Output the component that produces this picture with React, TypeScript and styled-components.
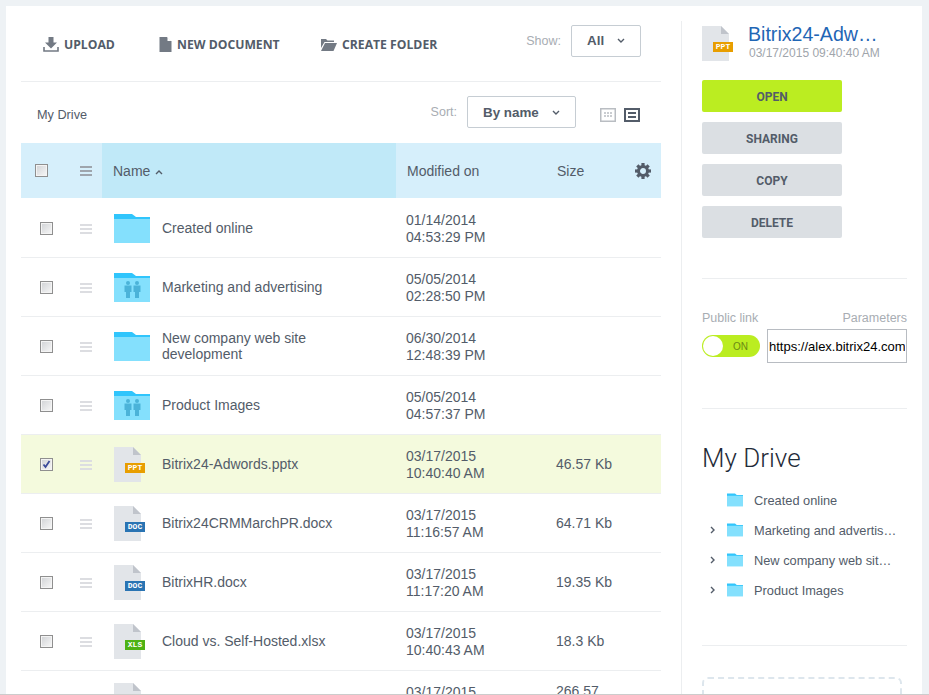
import React from "react";
import styled, { createGlobalStyle } from "styled-components";

const GlobalStyle = createGlobalStyle`
  html, body {
    margin: 0;
    padding: 0;
    background: #eef2f5;
    font-family: "Liberation Sans", Arial, sans-serif;
    color: #535c69;
  }
`;

const Page = styled.div`
  box-sizing: border-box;
  height: 695px;
  padding: 6px 7px 0 6px;
  overflow: hidden;
  border-bottom: 1px solid #ccc;
`;

const Card = styled.div`
  display: flex;
  height: 700px;
  background: #fff;
  padding: 0 15px;
  gap: 20px;
`;

const Main = styled.div`
  width: 640px;
  flex: none;
`;

const Toolbar = styled.div`
  box-sizing: border-box;
  display: flex;
  align-items: center;
  height: 76px;
  padding: 2px 0 0 22px;
  border-bottom: 1px solid #eceef0;
`;

const ToolButton = styled.div<{ $width: number }>`
  display: flex;
  align-items: center;
  width: ${(p) => p.$width}px;
  gap: 5px;
  font: 700 12.2px "Open Sans", sans-serif;
  color: #535c69;
  svg {
    flex: none;
  }
`;

const ShowWrap = styled.div`
  display: flex;
  align-items: center;
  margin-left: auto;
  margin-top: -8px;
  margin-right: 20px;
  gap: 10px;
`;

const Hint = styled.span`
  font-size: 12.5px;
  color: #a8adb3;
`;

const Select = styled.div<{ $width: number; $height: number }>`
  box-sizing: border-box;
  display: flex;
  align-items: center;
  justify-content: space-between;
  width: ${(p) => p.$width}px;
  height: ${(p) => p.$height}px;
  padding: 0 15px;
  border: 1px solid #c6cdd3;
  border-radius: 2px;
  font-size: 13.4px;
  font-weight: 700;
  color: #535c69;
`;

const SortRow = styled.div`
  display: flex;
  align-items: center;
  height: 61px;
  padding: 0 21px 0 16px;
`;

const Crumb = styled.span`
  font-size: 12.7px;
  margin-top: 4px;
  color: #535c69;
`;

const SortWrap = styled.div`
  display: flex;
  align-items: center;
  gap: 10px;
  margin-left: auto;
  margin-top: -1px;
`;

const ViewIcons = styled.div`
  display: flex;
  gap: 8px;
  margin-left: 24px;
  margin-top: 4px;
`;

const ViewIcon = styled.svg`
  display: block;
`;

const HeaderRow = styled.div`
  display: grid;
  grid-template-columns: 81px 294px 150px 1fr;
  height: 55px;
  margin-bottom: 1px;
  background: #d6effb;
  font-size: 14px;
`;

const Row = styled.div<{ $selected?: boolean }>`
  display: grid;
  grid-template-columns: 81px 294px 150px 1fr;
  height: 58px;
  border-bottom: 1px solid #eceef0;
  background: ${(p) => (p.$selected ? "#f4fadd" : "#fff")};
  font-size: 14px;
`;

const Controls = styled.div<{ $pad: number }>`
  display: flex;
  align-items: center;
  padding-left: ${(p) => p.$pad}px;
`;

const Check = styled.span`
  box-sizing: border-box;
  display: flex;
  align-items: center;
  justify-content: center;
  width: 13px;
  height: 13px;
  flex: none;
  border: 1px solid #8f8f8f;
  box-shadow: inset 0 0 0 1px #f4f4f4;
  background: linear-gradient(135deg, #d0d2d5, #f8f8f8);
`;

const Drag = styled.span<{ $color: string; $left: number }>`
  box-sizing: border-box;
  display: block;
  width: 12px;
  height: 10px;
  margin: 1px 0 0 ${(p) => p.$left}px;
  border-top: 2px solid ${(p) => p.$color};
  border-bottom: 2px solid ${(p) => p.$color};
  position: relative;
  &::after {
    content: "";
    position: absolute;
    left: 0;
    right: 0;
    top: 2px;
    height: 2px;
    background: ${(p) => p.$color};
  }
`;

const NameHead = styled.div`
  display: flex;
  align-items: center;
  gap: 5px;
  padding-left: 11px;
  background: #c0e9f8;
  svg {
    margin-top: 3px;
  }
`;

const HeadCell = styled.div`
  display: flex;
  align-items: center;
  padding-left: 11px;
`;

const SizeHead = styled(HeadCell)`
  justify-content: space-between;
  padding-right: 10px;
`;

const NameCell = styled.div`
  display: flex;
  align-items: center;
  gap: 12px;
  padding-left: 12px;
  line-height: 16px;
`;

const NameText = styled.span`
  max-width: 175px;
`;

const IconBox = styled.div`
  width: 36px;
  flex: none;
`;

const DateCell = styled.div`
  display: flex;
  align-items: center;
  padding: 1px 0 0 10px;
  line-height: 17px;
`;

const SizeCell = styled.div`
  display: flex;
  align-items: center;
  padding-left: 10px;
  width: 62px;
  line-height: 17px;
`;

const FileWrap = styled.div`
  position: relative;
  width: 27px;
  height: 35px;
  svg {
    display: block;
  }
`;

const Badge = styled.span<{ $color: string }>`
  position: absolute;
  left: 11px;
  top: 16px;
  width: 20px;
  height: 10px;
  background: ${(p) => p.$color};
  color: #fff;
  font: 700 8px/10px "Liberation Mono", monospace;
  text-align: center;
`;

const Aside = styled.aside`
  box-sizing: border-box;
  flex: none;
  width: 226px;
  margin-top: 15px;
  padding-left: 20px;
  border-left: 1px solid #eceef0;
`;

const FileHead = styled.div`
  display: flex;
  gap: 19px;
  height: 54px;
  padding-top: 5px;
`;

const FileInfo = styled.div`
  margin-top: -5px;
`;

const FileTitle = styled.div`
  font-size: 19.6px;
  line-height: 26px;
  color: #1f66b5;
  white-space: nowrap;
`;

const FileDate = styled.div`
  font-size: 12px;
  line-height: 13px;
  margin-left: 1px;
  color: #a0a5ab;
`;

const Actions = styled.div`
  display: flex;
  flex-direction: column;
  gap: 10px;
  padding-bottom: 40px;
  border-bottom: 1px solid #eceef0;
`;

const ActionButton = styled.div<{ $primary?: boolean }>`
  box-sizing: border-box;
  display: flex;
  align-items: center;
  justify-content: center;
  width: 140px;
  height: 32px;
  padding-top: 2px;
  border-radius: 2px;
  background: ${(p) => (p.$primary ? "#bbed21" : "#dbdfe3")};
  font: 700 12px "Roboto", sans-serif;
  color: #535c69;
`;

const LinkSection = styled.div`
  height: 130px;
  box-sizing: border-box;
  padding-top: 32px;
  border-bottom: 1px solid #eceef0;
`;

const LinkLabels = styled.div`
  display: flex;
  justify-content: space-between;
  font-size: 12.5px;
  line-height: 14px;
  color: #a8adb3;
`;

const LinkRow = styled.div`
  display: flex;
  align-items: center;
  gap: 7px;
  margin-top: 4px;
`;

const Toggle = styled.div`
  box-sizing: border-box;
  display: flex;
  align-items: center;
  gap: 10px;
  width: 58px;
  height: 22px;
  padding-left: 1px;
  border-radius: 11px;
  background: #bbed21;
  font-size: 10px;
  color: #6b8a14;
  &::before {
    content: "";
    width: 20px;
    height: 20px;
    border-radius: 50%;
    background: #fff;
  }
`;

const LinkInput = styled.input`
  box-sizing: border-box;
  width: 140px;
  height: 34px;
  padding: 0 1px;
  border: 1px solid #b8bcc2;
  font: 13px "Liberation Sans", Arial, sans-serif;
  color: #000;
  outline: none;
`;

const TreeSection = styled.div`
  height: 237px;
  box-sizing: border-box;
  padding-top: 31px;
  border-bottom: 1px solid #eceef0;
`;

const TreeTitle = styled.div`
  font: 300 26px/36px "Roboto", sans-serif;
  color: #1f2b38;
`;

const Tree = styled.div`
  margin-top: 9px;
`;

const TreeRow = styled.div`
  display: flex;
  align-items: center;
  height: 30px;
  font-size: 12.8px;
  color: #535c69;
`;

const Arrow = styled.span`
  display: flex;
  width: 25px;
  flex: none;
  padding-left: 8px;
  box-sizing: border-box;
`;

const TreeName = styled.span`
  max-width: 143px;
  margin-left: 11px;
  overflow: hidden;
  white-space: nowrap;
  text-overflow: ellipsis;
`;

const Dropzone = styled.div`
  box-sizing: border-box;
  width: 200px;
  height: 60px;
  margin-top: 31px;
  border: 2px dashed #dde6ed;
  border-radius: 6px;
`;

const Folder = ({ width, height, shared }: { width: number; height: number; shared?: boolean }) => (
  <svg width={width} height={height} viewBox="0 0 36 29" style={{ display: "block" }}>
    <path d="M0 0H18L22 3H36V8H0Z" fill="#30c5fc" />
    <rect y="5" width="36" height="24" fill="#84e0fd" />
    {shared && (
      <g fill="#4bb3d9">
        <circle cx="14" cy="10" r="2" />
        <path d="M10.5 12.5h7v6.5h-1.5v6h-4v-6h-1.5z" />
        <circle cx="23" cy="10" r="2" />
        <path d="M19.5 12.5h7v6.5h-1.5v6h-4v-6h-1.5z" />
      </g>
    )}
  </svg>
);

const FileIcon = ({ label, color }: { label: string; color: string }) => (
  <FileWrap>
    <svg width="27" height="35" viewBox="0 0 27 35">
      <path d="M0 0H19L27 8V35H0Z" fill="#e2e5e9" />
      <path d="M19 0L27 8H19Z" fill="#c0c4cb" />
    </svg>
    <Badge $color={color}>{label}</Badge>
  </FileWrap>
);

const Chevron = ({ dir }: { dir: "down" | "up" | "right" }) => {
  const d = dir === "down" ? "M1 1l3 3 3-3" : dir === "up" ? "M1 4l3-3 3 3" : "M1 1l3 3-3 3";
  return (
    <svg width={dir === "right" ? 6 : 8} height={dir === "right" ? 8 : 5} viewBox={dir === "right" ? "0 0 6 8" : "0 0 8 5"}>
      <path d={d} fill="none" stroke="#535c69" strokeWidth="1.4" />
    </svg>
  );
};

const Gear = () => (
  <svg width="16" height="16" viewBox="0 0 16 16">
    <circle cx="8" cy="8" r="4.5" fill="none" stroke="#535c69" strokeWidth="3" />
    {[0, 45, 90, 135, 180, 225, 270, 315].map((a) => (
      <rect key={a} x="6.4" y="0" width="3.2" height="3.5" fill="#535c69" transform={`rotate(${a} 8 8)`} />
    ))}
  </svg>
);

interface FileRow {
  name?: string;
  folder?: boolean;
  shared?: boolean;
  badge?: [string, string];
  date: string;
  time?: string;
  size?: string;
  selected?: boolean;
}

const ppt: [string, string] = ["PPT", "#e89e00"];
const doc: [string, string] = ["DOC", "#2a74b3"];
const xls: [string, string] = ["XLS", "#4eb214"];

const rows: FileRow[] = [
  { name: "Created online", folder: true, date: "01/14/2014", time: "04:53:29 PM" },
  { name: "Marketing and advertising", folder: true, shared: true, date: "05/05/2014", time: "02:28:50 PM" },
  { name: "New company web site development", folder: true, date: "06/30/2014", time: "12:48:39 PM" },
  { name: "Product Images", folder: true, shared: true, date: "05/05/2014", time: "04:57:37 PM" },
  { name: "Bitrix24-Adwords.pptx", badge: ppt, date: "03/17/2015", time: "10:40:40 AM", size: "46.57 Kb", selected: true },
  { name: "Bitrix24CRMMarchPR.docx", badge: doc, date: "03/17/2015", time: "11:16:57 AM", size: "64.71 Kb" },
  { name: "BitrixHR.docx", badge: doc, date: "03/17/2015", time: "11:17:20 AM", size: "19.35 Kb" },
  { name: "Cloud vs. Self-Hosted.xlsx", badge: xls, date: "03/17/2015", time: "10:40:43 AM", size: "18.3 Kb" },
  { date: "03/17/2015", time: "10:40:43 AM", size: "266.57 Kb" },
];

const tree = [
  { name: "Created online" },
  { name: "Marketing and advertising", arrow: true },
  { name: "New company web site development", arrow: true },
  { name: "Product Images", arrow: true },
];

const App: React.FC = () => {
  return (
    <Page>
      <GlobalStyle />
      <Card>
        <Main>
          <Toolbar>
            <ToolButton $width={116}>
              <svg width="16" height="15" viewBox="0 0 16 15">
                <path d="M5.5 0h5v5.5H14L8 11.5 2 5.5h3.5z" fill="#737a84" />
                <path d="M1 10v4h14v-4" fill="none" stroke="#737a84" strokeWidth="1.6" />
              </svg>
              UPLOAD
            </ToolButton>
            <ToolButton $width={162}>
              <svg width="13" height="15" viewBox="0 0 12 15">
                <path d="M0 0h7.5L12 4.5V15H0z" fill="#737a84" />
                <path d="M8 0l4 4H8z" fill="#fff" />
              </svg>
              NEW DOCUMENT
            </ToolButton>
            <ToolButton $width={140}>
              <svg width="16" height="13" viewBox="0 0 16 13">
                <path d="M0 1h5l1.5 1.5H13V4H3.5L0 10z" fill="#737a84" />
                <path d="M4 5h12l-3.5 8H0z" fill="#737a84" />
              </svg>
              CREATE FOLDER
            </ToolButton>
            <ShowWrap>
              <Hint>Show:</Hint>
              <Select $width={70} $height={32}>
                All
                <Chevron dir="down" />
              </Select>
            </ShowWrap>
          </Toolbar>
          <SortRow>
            <Crumb>My Drive</Crumb>
            <SortWrap>
              <Hint>Sort:</Hint>
              <Select $width={109} $height={32}>
                By name
                <Chevron dir="down" />
              </Select>
            </SortWrap>
            <ViewIcons>
              <ViewIcon width="16" height="14" viewBox="0 0 16 14">
                <rect x="0.75" y="0.75" width="14.5" height="12.5" fill="none" stroke="#b9bdc2" strokeWidth="1.5" />
                <path d="M4 5h2M7 5h2M10 5h2M4 8h2M7 8h2M10 8h2" stroke="#b9bdc2" strokeWidth="1.5" />
              </ViewIcon>
              <ViewIcon width="16" height="14" viewBox="0 0 16 14">
                <rect x="1" y="1" width="14" height="12" fill="none" stroke="#535c69" strokeWidth="2" />
                <path d="M4 5h8M4 9h8" stroke="#535c69" strokeWidth="2" />
              </ViewIcon>
            </ViewIcons>
          </SortRow>
          <HeaderRow>
            <Controls $pad={14}>
              <Check />
              <Drag $color="#9ea5ad" $left={32} />
            </Controls>
            <NameHead>
              Name <Chevron dir="up" />
            </NameHead>
            <HeadCell>Modified on</HeadCell>
            <SizeHead>
              Size
              <Gear />
            </SizeHead>
          </HeaderRow>
          {rows.map((r, i) => (
            <Row key={i} $selected={r.selected}>
              <Controls $pad={19}>
                <Check>
                  {r.selected && (
                    <svg width="9" height="9" viewBox="0 0 9 9">
                      <path d="M1.5 4.5l2 2.5 4-6" fill="none" stroke="#3a4a9a" strokeWidth="1.8" />
                    </svg>
                  )}
                </Check>
                <Drag $color="#dcdde1" $left={27} />
              </Controls>
              <NameCell>
                <IconBox>
                  {r.folder ? (
                    <Folder width={36} height={29} shared={r.shared} />
                  ) : (
                    r.badge ? <FileIcon label={r.badge[0]} color={r.badge[1]} /> : <FileIcon label="" color="transparent" />
                  )}
                </IconBox>
                {r.name && <NameText>{r.name}</NameText>}
              </NameCell>
              <DateCell>
                {r.date}
                <br />
                {r.time}
              </DateCell>
              <SizeCell>{r.size}</SizeCell>
            </Row>
          ))}
        </Main>
        <Aside>
          <FileHead>
            <FileIcon label="PPT" color="#e89e00" />
            <FileInfo>
              <FileTitle>Bitrix24-Adw…</FileTitle>
              <FileDate>03/17/2015 09:40:40 AM</FileDate>
            </FileInfo>
          </FileHead>
          <Actions>
            <ActionButton $primary>OPEN</ActionButton>
            <ActionButton>SHARING</ActionButton>
            <ActionButton>COPY</ActionButton>
            <ActionButton>DELETE</ActionButton>
          </Actions>
          <LinkSection>
            <LinkLabels>
              <span>Public link</span>
              <span>Parameters</span>
            </LinkLabels>
            <LinkRow>
              <Toggle>ON</Toggle>
              <LinkInput readOnly value="https://alex.bitrix24.com" />
            </LinkRow>
          </LinkSection>
          <TreeSection>
            <TreeTitle>My Drive</TreeTitle>
            <Tree>
              {tree.map((t) => (
                <TreeRow key={t.name}>
                  <Arrow>{t.arrow && <Chevron dir="right" />}</Arrow>
                  <Folder width={16} height={14} />
                  <TreeName>{t.name}</TreeName>
                </TreeRow>
              ))}
            </Tree>
          </TreeSection>
          <Dropzone />
        </Aside>
      </Card>
    </Page>
  );
};

export default App;
